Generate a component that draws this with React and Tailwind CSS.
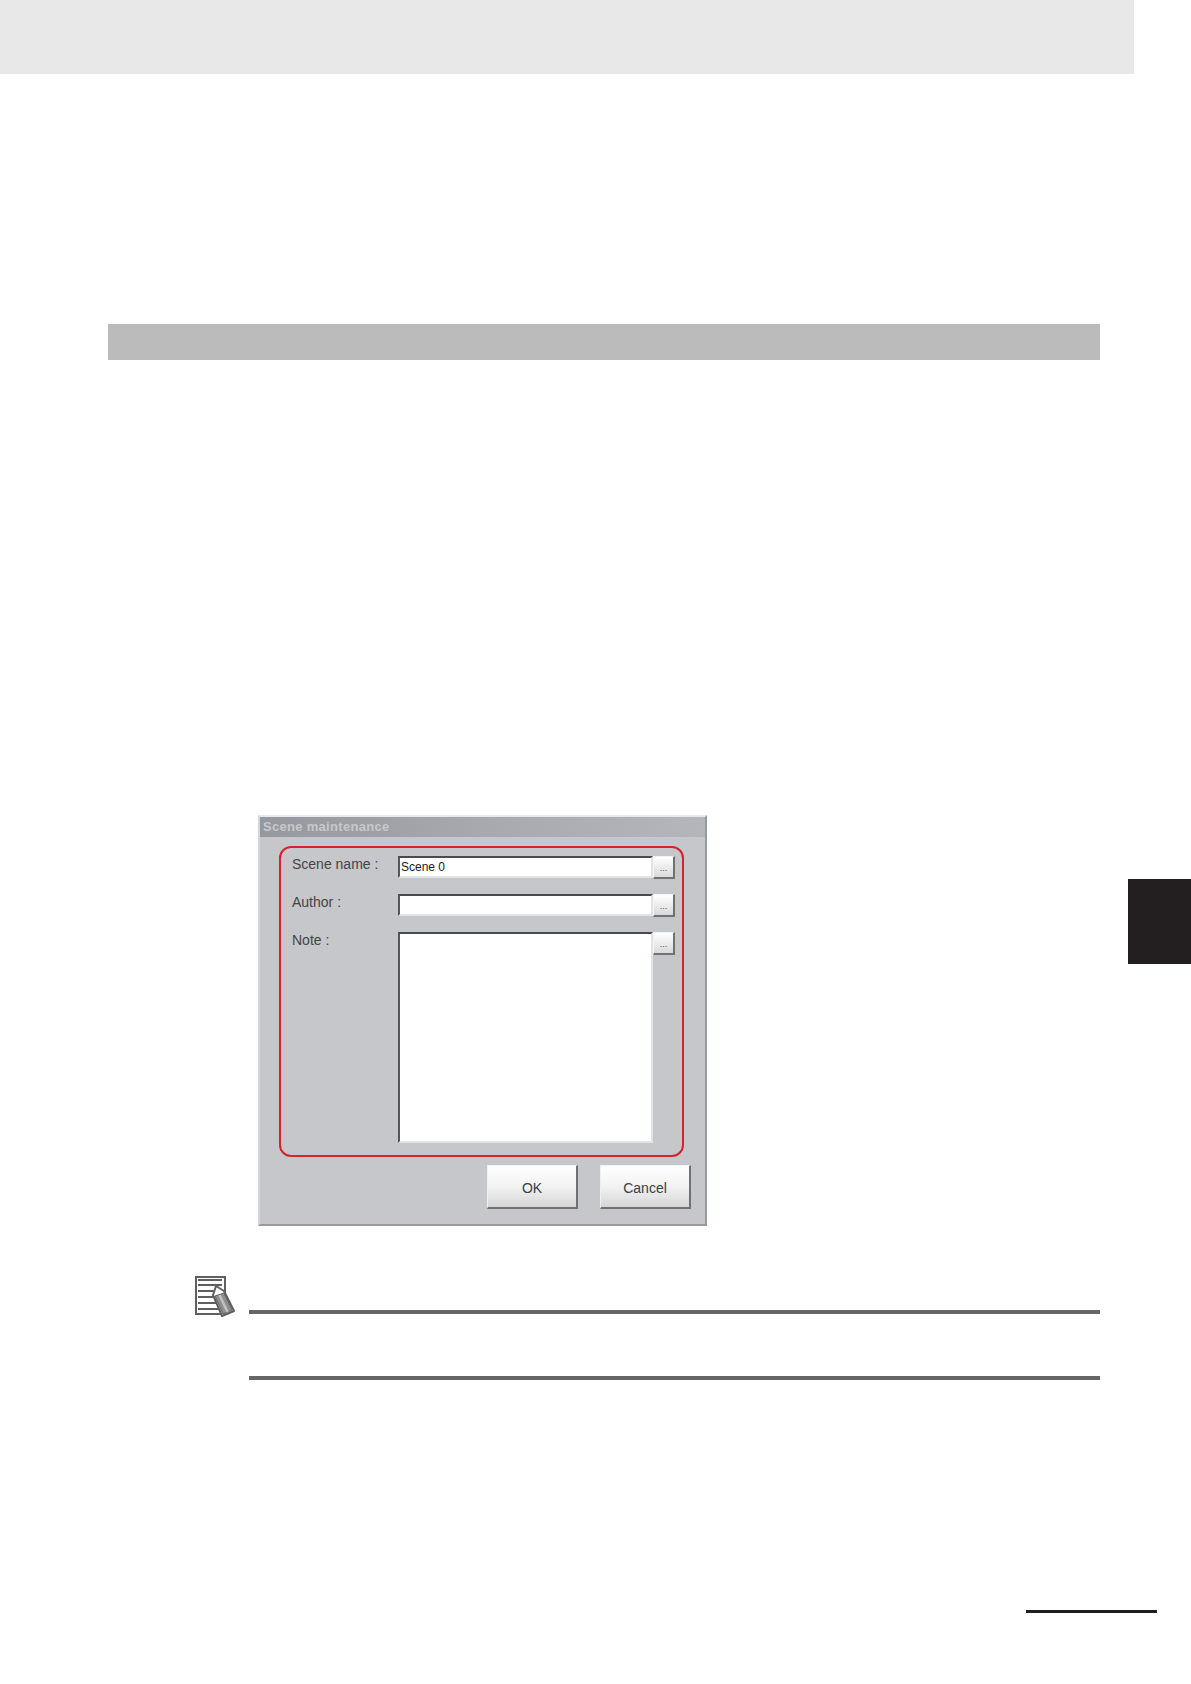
const sans = "font-['Liberation_Sans',Arial,sans-serif]"

function NoteIcon() {
  return (
    <svg width="40" height="42" viewBox="0 0 40 42" className="shrink-0">
      <rect x="1" y="1" width="29" height="37" fill="#fff" stroke="#5f5f5f" strokeWidth="2" />
      <path d="M3 4h24M3 9h24M3 15h24M3 21h24M3 27h24M3 33h24" stroke="#5f5f5f" strokeWidth="2" />
      <path d="M21 10L29 15L39 35L27 40L18 19Z" fill="#fff" stroke="#5f5f5f" strokeWidth="2" strokeLinejoin="round" />
      <path d="M20 20L29 17L37 34L28 38Z" fill="#8f8f8f" stroke="#5f5f5f" strokeWidth="1" />
      <path d="M24.5 19L32.5 36" stroke="#c2c2c2" strokeWidth="2.5" />
    </svg>
  )
}

function SmallButton() {
  return (
    <button className="w-[22px] h-[23px] shrink-0 flex items-end justify-center pb-[5px] border border-[#f4f4f4] border-r-2 border-b-2 border-r-[#6f7175] border-b-[#6f7175] bg-gradient-to-b from-[#ffffff] to-[#d9d9d9] text-[9px] leading-[8px] text-[#555]">
      ...
    </button>
  )
}

function Label({ children }) {
  return <div className="w-[117px] pl-[11px] -mt-[1px] text-[14px] leading-[18px] text-[#444]">{children}</div>
}

function Field({ label, value, top }) {
  return (
    <div className={`flex items-start ${top}`}>
      <Label>{label}</Label>
      <div className="w-[255px] h-[22px] flex items-center pl-[1px] bg-white border-t-2 border-l-2 border-t-[#4a4a4a] border-l-[#555] border-b-2 border-r-2 border-b-[#e2e3e5] border-r-[#e2e3e5] text-[12px] text-[#222]">
        {value}
      </div>
      <SmallButton />
    </div>
  )
}

function DialogButton({ children }) {
  return (
    <button className="w-[91px] h-[44px] pt-[3px] border border-[#f0f0f0] border-r-2 border-b-2 border-r-[#6f7175] border-b-[#6f7175] bg-gradient-to-b from-[#ffffff] via-[#f2f2f2] to-[#d6d6d6] text-[14px] text-[#3a3d4a]">
      {children}
    </button>
  )
}

function Dialog() {
  return (
    <div className={`w-[449px] h-[411px] flex flex-col bg-[#c5c7cb] border-t-2 border-l-2 border-t-[#e9e9eb] border-l-[#d5d6d9] border-r-2 border-b-2 border-r-[#97999d] border-b-[#97999d] ${sans}`}>
      <div className="h-[20px] shrink-0 pl-[3px] flex items-center bg-gradient-to-r from-[#95989e] via-[#a6a9ae] to-[#b3b6ba] text-[13px] font-bold text-[#c6c8cc] tracking-[0.3px]">
        Scene maintenance
      </div>
      <div className="ml-[19px] mt-[9px] w-[405px] h-[311px] shrink-0 rounded-[12px] border-2 border-[#d8202f] pt-[8px] flex flex-col">
        <Field label="Scene name :" value="Scene 0" top="" />
        <Field label="Author :" value="" top="mt-[15px]" />
        <div className="flex items-start mt-[15px]">
          <Label>Note :</Label>
          <div className="w-[255px] h-[211px] bg-white border-t-2 border-l-2 border-t-[#4a4a4a] border-l-[#555] border-b-2 border-r-2 border-b-[#e2e3e5] border-r-[#e2e3e5]" />
          <SmallButton />
        </div>
      </div>
      <div className="flex justify-end gap-[22px] mt-[8px] pr-[14px]">
        <DialogButton>OK</DialogButton>
        <DialogButton>Cancel</DialogButton>
      </div>
    </div>
  )
}

export default function App() {
  return (
    <div className="w-[1191px] h-[1684px] bg-white overflow-hidden flex flex-col">
      <div className="w-[1134px] h-[74px] shrink-0 bg-[#e8e8e8]" />
      <div className="w-[992px] h-[36px] shrink-0 ml-[108px] mt-[250px] bg-[#bbbbbb]" />

      <div className="flex items-start mt-[455px]">
        <div className="ml-[258px]">
          <Dialog />
        </div>
        <div className="ml-auto mt-[64px] w-[63px] h-[85px] bg-[#231f20]" />
      </div>

      <div className="flex items-start ml-[195px] mt-[50px]">
        <NoteIcon />
        <div className="ml-[14px] w-[851px] mt-[34px]">
          <div className="h-[4px] bg-[#666666]" />
          <div className="h-[4px] mt-[62px] bg-[#666666]" />
        </div>
      </div>

      <div className="w-[131px] h-[3px] ml-[1026px] mt-[230px] bg-[#231f20]" />
    </div>
  )
}
